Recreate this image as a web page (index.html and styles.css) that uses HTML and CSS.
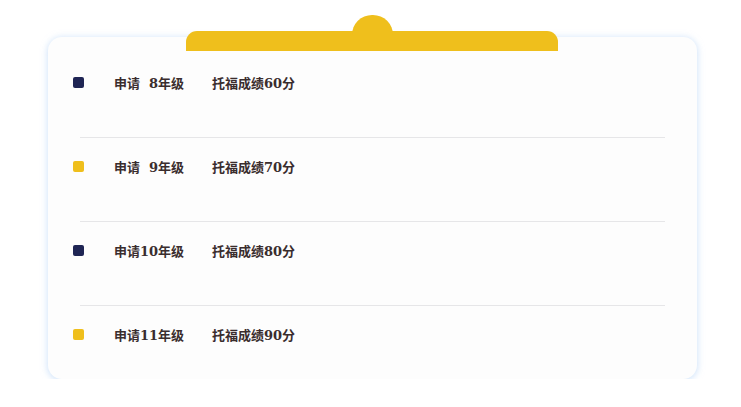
FILE: index.html
```html
<!DOCTYPE html>
<html lang="zh">
<head>
<meta charset="utf-8">
<link rel="stylesheet" href="styles.css">
</head>
<body>
<div class="page">
  <div class="card">
    <div class="tab"><div class="bump"></div></div>
    <div class="list">
      <div class="item"><span class="dot navy"></span><span class="grade">申请  8年级</span><span class="score">托福成绩60分</span></div>
      <div class="divider"></div>
      <div class="item"><span class="dot gold"></span><span class="grade">申请  9年级</span><span class="score">托福成绩70分</span></div>
      <div class="divider"></div>
      <div class="item"><span class="dot navy"></span><span class="grade">申请10年级</span><span class="score">托福成绩80分</span></div>
      <div class="divider"></div>
      <div class="item last"><span class="dot gold"></span><span class="grade">申请11年级</span><span class="score">托福成绩90分</span></div>
    </div>
  </div>
</div>
</body>
</html>
```
FILE: styles.css
```css
html, body { margin: 0; padding: 0; background: #ffffff; }
.page { padding: 37px 0 0 48px; }
.card {
  position: relative;
  width: 649px;
  height: 342px;
  box-sizing: border-box;
  background: #fdfdfd;
  border-radius: 14px;
  box-shadow: 0 1px 6px 1px rgba(175, 208, 245, 0.55);
}
.tab {
  position: absolute;
  left: 138px;
  top: -6px;
  width: 372px;
  height: 20px;
  background: #efbf1c;
  border-radius: 11px 11px 0 0;
}
.bump {
  position: absolute;
  left: 166px;
  top: -16px;
  width: 41px;
  height: 22px;
  background: #efbf1c;
  border-radius: 20px 20px 0 0;
}
.list { padding-top: 17px; }
.item {
  display: flex;
  align-items: center;
  padding: 18px 0 45px 25px;
  height: 20px;
  font-family: "DejaVu Serif", "Noto Sans CJK SC", serif;
  font-weight: bold;
  font-size: 13px;
  color: #3a2d2e;
}
.item.last { padding-bottom: 35px; }
.divider { height: 1px; background: #e6e6e8; margin: 0 32px; }
.dot {
  width: 11px;
  height: 11px;
  border-radius: 2px;
  margin-right: 30px;
}
.navy { background: #1f2554; }
.gold { background: #efbf1c; }
.grade { width: 98px; white-space: pre; }
.score { white-space: pre; }
```
